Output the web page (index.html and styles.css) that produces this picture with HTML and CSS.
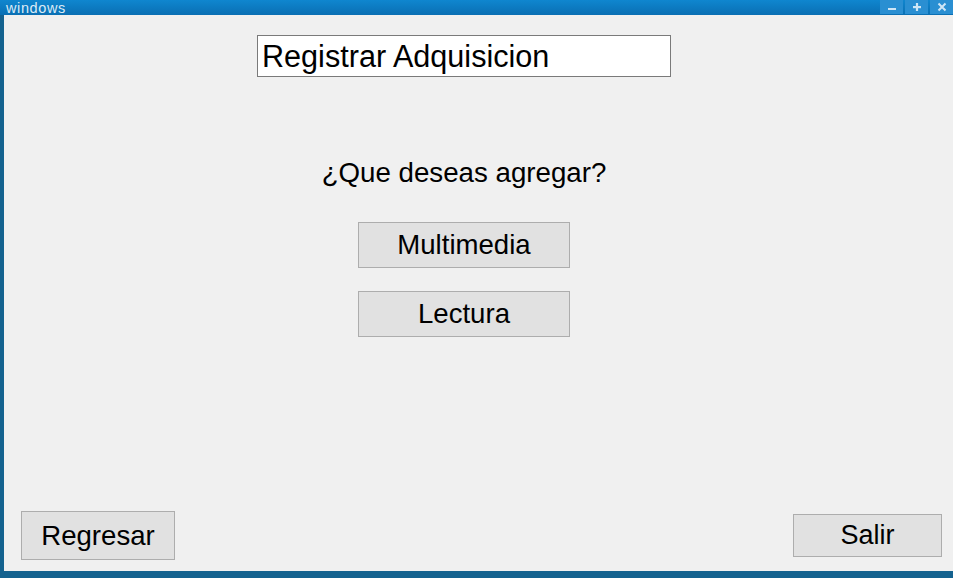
FILE: index.html
```html
<!DOCTYPE html>
<html lang="es">
<head>
<meta charset="utf-8">
<title>windows</title>
<link rel="stylesheet" href="styles.css">
</head>
<body>
<div class="window">
  <div class="titlebar">
    <span class="title">windows</span>
    <div class="controls">
      <div class="ctrl"><svg width="10" height="10" viewBox="0 0 10 10"><rect x="1" y="6" width="8" height="2" fill="#cfe6f6"/></svg></div>
      <div class="ctrl"><svg width="10" height="10" viewBox="0 0 10 10"><rect x="1" y="4" width="8" height="2.2" fill="#cfe6f6"/><rect x="3.9" y="1" width="2.2" height="8" fill="#cfe6f6"/></svg></div>
      <div class="ctrl"><svg width="10" height="10" viewBox="0 0 10 10"><path d="M1.5 1.5 L8.5 8.5 M8.5 1.5 L1.5 8.5" stroke="#cfe6f6" stroke-width="2"/></svg></div>
    </div>
  </div>
  <div class="frame">
    <div class="content">
      <div class="column">
        <div class="textbox">Registrar Adquisicion</div>
        <div class="question">¿Que deseas agregar?</div>
        <div class="choices">
          <button class="btn choice">Multimedia</button>
          <button class="btn choice">Lectura</button>
        </div>
      </div>
      <div class="bottom">
        <button class="btn back">Regresar</button>
        <button class="btn exit">Salir</button>
      </div>
    </div>
  </div>
</div>
</body>
</html>
```

FILE: styles.css
```css
* { box-sizing: border-box; }
html, body {
  margin: 0;
  padding: 0;
  width: 953px;
  height: 578px;
  overflow: hidden;
  font-family: "Liberation Sans", Arial, sans-serif;
}
.window {
  width: 953px;
  height: 578px;
  display: flex;
  flex-direction: column;
  background: #14628f;
}
.titlebar {
  height: 15px;
  flex: none;
  display: flex;
  justify-content: space-between;
  align-items: flex-start;
  background: linear-gradient(#0f86cf, #0a6fb3);
}
.title {
  display: block;
  color: #dcebf6;
  font-size: 14.5px;
  letter-spacing: 0.6px;
  line-height: 17px;
  padding-left: 6px;
  position: relative;
  z-index: 1;
}
.controls {
  display: flex;
  gap: 2px;
  height: 14px;
}
.ctrl {
  width: 23px;
  height: 14px;
  background: #2a8fd2;
  display: flex;
  align-items: center;
  justify-content: center;
}
.frame {
  flex: 1;
  display: flex;
  padding: 0 0 7px 4px;
  background: #14628f;
}
.content {
  flex: 1;
  background: #f0f0f0;
  display: flex;
  flex-direction: column;
}
.column {
  width: 414px;
  margin-left: 253px;
  padding-top: 20px;
  display: flex;
  flex-direction: column;
  align-items: center;
}
.textbox {
  width: 414px;
  height: 42px;
  background: #ffffff;
  border: 1px solid #7a7a7a;
  font-size: 30.6px;
  line-height: 34px;
  padding: 3px 0 0 4px;
  color: #000;
}
.question {
  margin-top: 80px;
  font-size: 27.7px;
  line-height: 32px;
  color: #000;
}
.choices {
  margin-top: 33px;
  display: flex;
  flex-direction: column;
  gap: 23px;
}
.btn {
  font-family: "Liberation Sans", Arial, sans-serif;
  font-size: 27.6px;
  color: #000;
  background: #e1e1e1;
  border: 1px solid #adadad;
  padding: 0;
  display: flex;
  align-items: center;
  justify-content: center;
}
.choice {
  width: 212px;
  height: 46px;
}
.bottom {
  margin-top: auto;
  display: flex;
  justify-content: space-between;
  align-items: center;
  padding: 0 11px 11px 17px;
}
.back {
  width: 154px;
  height: 49px;
}
.exit {
  width: 149px;
  height: 43px;
  font-size: 27px;
}
```
